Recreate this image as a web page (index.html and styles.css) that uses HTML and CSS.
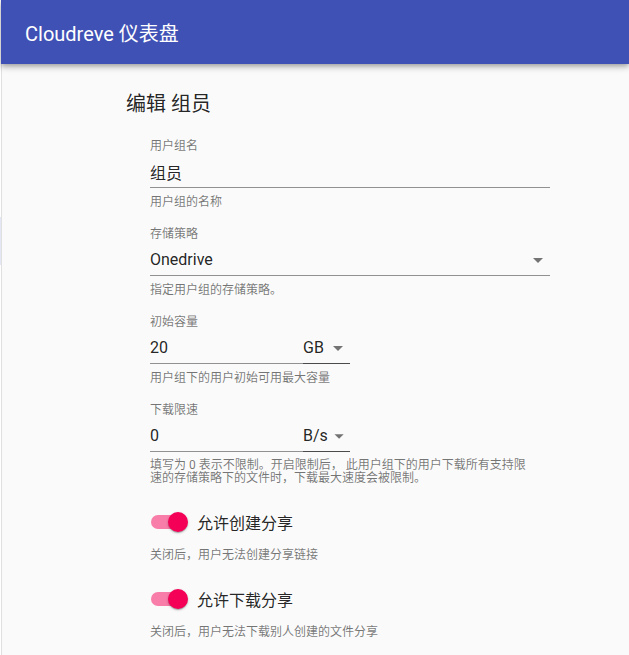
FILE: index.html
```html
<!DOCTYPE html>
<html lang="zh-CN">
<head>
    <meta charset="UTF-8">
    <meta name="viewport" content="width=device-width, initial-scale=1.0">
    <title>Cloudreve 仪表盘</title>
    <link rel="stylesheet" href="styles.css">
</head>
<body>
    <header class="appbar">
        <h1 class="appbar-title">Cloudreve 仪表盘</h1>
    </header>
    <div class="layout">
        <aside class="drawer">
            <div class="drawer-item active"></div>
        </aside>
        <main class="content">
            <h2 class="page-title">编辑 组员</h2>
            <form class="group-form">
                <div class="field">
                    <label class="field-label">用户组名</label>
                    <div class="input">组员</div>
                    <p class="helper">用户组的名称</p>
                </div>

                <div class="field">
                    <label class="field-label">存储策略</label>
                    <div class="input select">
                        <span>Onedrive</span>
                        <svg class="arrow" viewBox="0 0 24 24" width="24" height="24"><path d="M7 10l5 5 5-5z"/></svg>
                    </div>
                    <p class="helper">指定用户组的存储策略。</p>
                </div>

                <div class="field">
                    <label class="field-label">初始容量</label>
                    <div class="input-row">
                        <div class="input num">20</div>
                        <div class="input select unit">
                            <span>GB</span>
                            <svg class="arrow" viewBox="0 0 24 24" width="24" height="24"><path d="M7 10l5 5 5-5z"/></svg>
                        </div>
                    </div>
                    <p class="helper">用户组下的用户初始可用最大容量</p>
                </div>

                <div class="field">
                    <label class="field-label">下载限速</label>
                    <div class="input-row">
                        <div class="input num">0</div>
                        <div class="input select unit">
                            <span>B/s</span>
                            <svg class="arrow" viewBox="0 0 24 24" width="24" height="24"><path d="M7 10l5 5 5-5z"/></svg>
                        </div>
                    </div>
                    <p class="helper multi">填写为 0 表示不限制。开启限制后， 此用户组下的用户下载所有支持限<br>速的存储策略下的文件时，下载最大速度会被限制。</p>
                </div>

                <div class="switch-field">
                    <div class="switch-row">
                        <span class="toggle"><span class="track"></span><span class="thumb"></span></span>
                        <span class="switch-label">允许创建分享</span>
                    </div>
                    <p class="helper">关闭后，用户无法创建分享链接</p>
                </div>

                <div class="switch-field">
                    <div class="switch-row">
                        <span class="toggle"><span class="track"></span><span class="thumb"></span></span>
                        <span class="switch-label">允许下载分享</span>
                    </div>
                    <p class="helper">关闭后，用户无法下载别人创建的文件分享</p>
                </div>
            </form>
        </main>
    </div>
</body>
</html>
```

FILE: styles.css
```css
body {
    font-family: Roboto, "Noto Sans CJK SC", sans-serif;
    margin: 0;
    padding: 0;
    background-color: #fafafa;
    height: 655px;
    display: flex;
    flex-direction: column;
    overflow: hidden;
}
.appbar {
    position: relative;
    z-index: 2;
    flex-shrink: 0;
    height: 64px;
    margin-left: 1px;
    padding: 0 24px;
    background-color: #3f51b5;
    display: flex;
    align-items: center;
    box-shadow: 0 2px 4px -1px rgba(0, 0, 0, 0.2), 0 4px 5px 0 rgba(0, 0, 0, 0.14), 0 1px 10px 0 rgba(0, 0, 0, 0.12);
}
.appbar-title {
    margin: 0;
    font-size: 20px;
    font-weight: 400;
    color: #ffffff;
}
.layout {
    flex: 1 0 auto;
    display: flex;
}
.drawer {
    width: 1px;
    background-color: #ffffff;
    border-right: 1px solid #e0e0e0;
}
.drawer-item {
    height: 48px;
    margin-top: 153px;
}
.drawer-item.active {
    background-color: #e3e6f4;
}
.content {
    flex: 1;
    padding: 26px 0 0 124px;
}
.page-title {
    margin: 0;
    font-size: 20px;
    font-weight: 400;
    line-height: 28px;
    color: rgba(0, 0, 0, 0.87);
}
.group-form {
    padding-left: 24px;
    margin-top: 22px;
}
.field {
    width: 400px;
    margin-bottom: 20px;
}
.field-label {
    display: block;
    font-size: 12px;
    line-height: 12px;
    color: rgba(0, 0, 0, 0.54);
    margin-bottom: 4px;
}
.input {
    height: 32px;
    box-sizing: border-box;
    display: flex;
    align-items: center;
    font-size: 16px;
    color: rgba(0, 0, 0, 0.87);
    border-bottom: 1px solid rgba(0, 0, 0, 0.42);
}
.select {
    justify-content: space-between;
}
.arrow {
    fill: rgba(0, 0, 0, 0.54);
}
.input-row {
    width: 200px;
    display: flex;
}
.input.num {
    flex: 1;
}
.input.unit {
    width: 47px;
    border-bottom-color: rgba(0, 0, 0, 0.7);
}
.helper {
    margin: 8px 0 0 0;
    font-size: 12px;
    line-height: 12px;
    color: rgba(0, 0, 0, 0.54);
}
.helper.multi {
    line-height: 13px;
    margin-top: 7px;
}
.switch-field {
    margin-top: -7px;
    margin-bottom: 21px;
}
.switch-row {
    height: 48px;
    display: flex;
    align-items: center;
}
.switch-field .helper {
    margin-top: 3px;
}
.toggle {
    display: flex;
    align-items: center;
    width: 38px;
}
.track {
    width: 34px;
    height: 14px;
    margin-left: 1px;
    border-radius: 7px;
    background-color: #f87da8;
}
.thumb {
    width: 20px;
    height: 20px;
    margin-left: -17px;
    border-radius: 50%;
    background-color: #f50057;
    box-shadow: 0 1px 3px 0 rgba(0, 0, 0, 0.2), 0 1px 1px 0 rgba(0, 0, 0, 0.14), 0 2px 1px -1px rgba(0, 0, 0, 0.12);
}
.switch-label {
    margin-left: 9px;
    font-size: 16px;
    color: rgba(0, 0, 0, 0.87);
}
```
